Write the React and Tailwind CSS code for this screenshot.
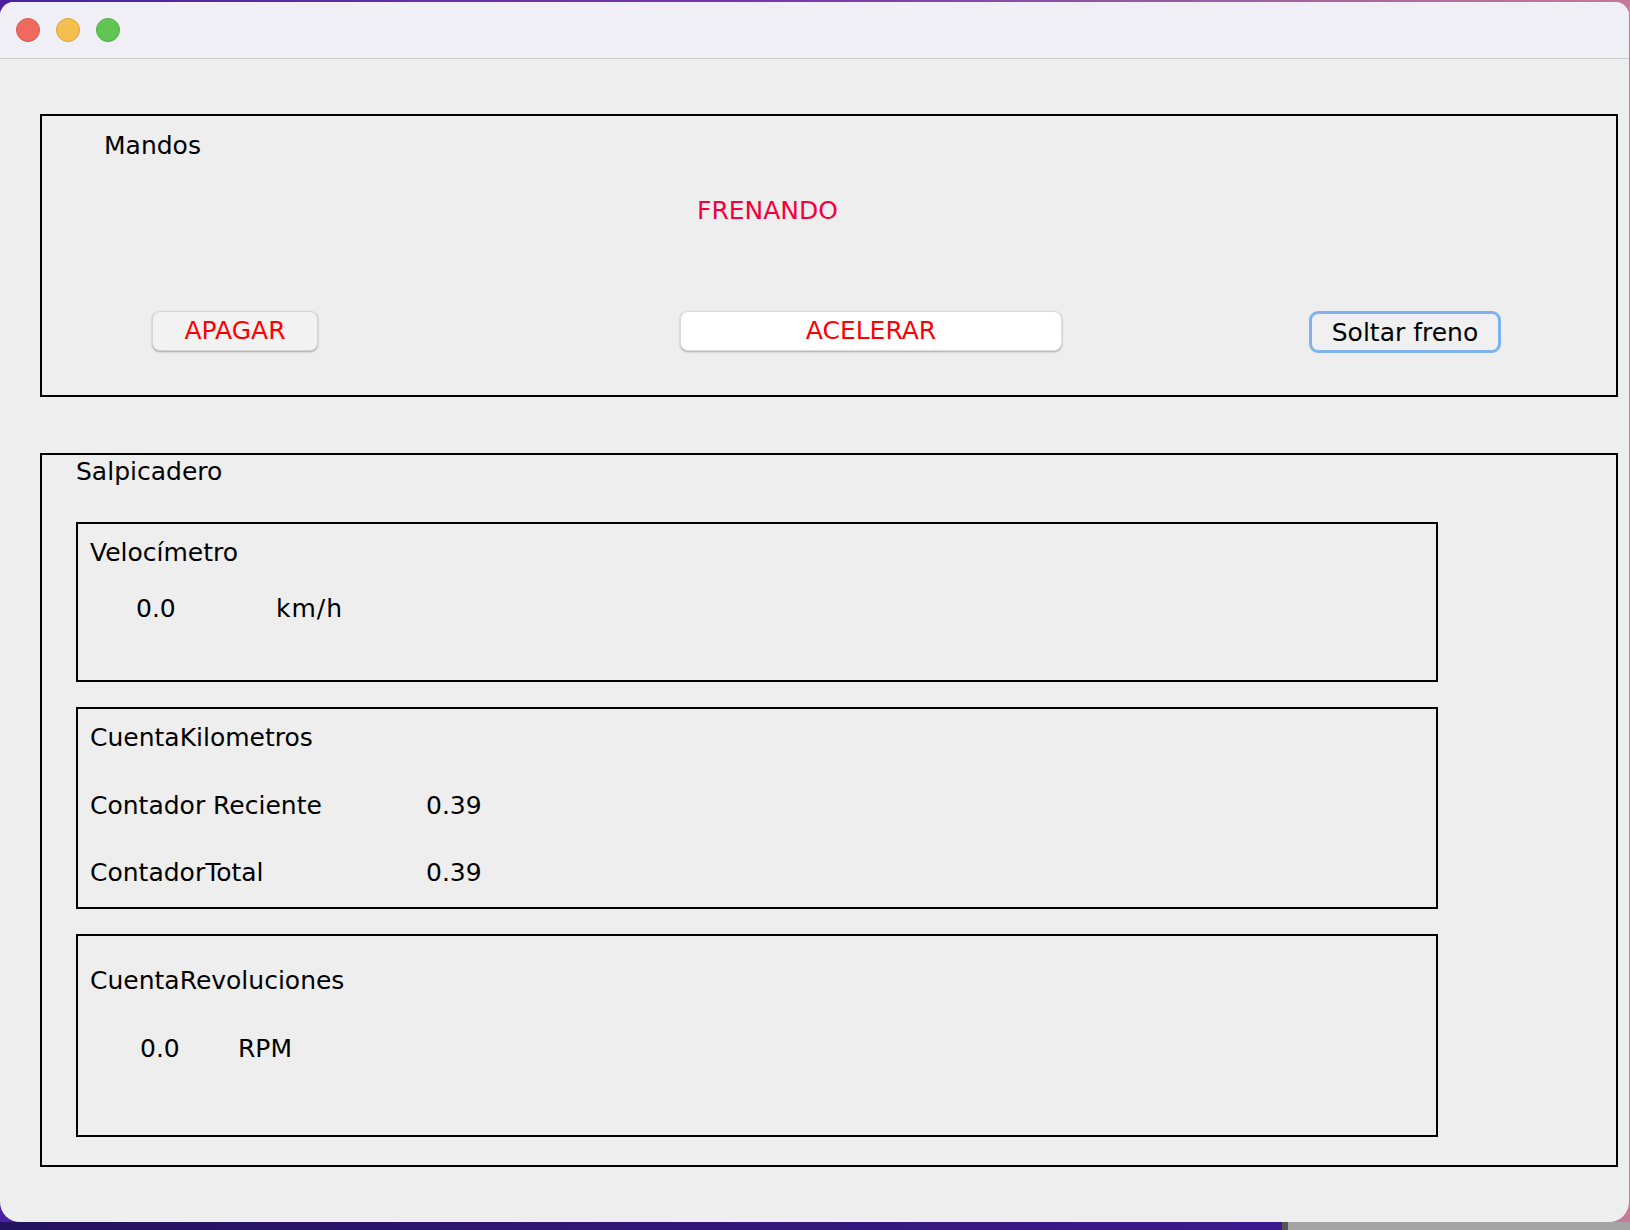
const font = { fontFamily: '"DejaVu Sans", "Liberation Sans", sans-serif' }

function TrafficLights() {
  return (
    <div className="flex items-center gap-[16px] pl-[16px]">
      <span className="h-[24px] w-[24px] rounded-full border border-[#d9574e] bg-[#ee6a5f]" />
      <span className="h-[24px] w-[24px] rounded-full border border-[#dba33c] bg-[#f5bf4f]" />
      <span className="h-[24px] w-[24px] rounded-full border border-[#4fae45] bg-[#61c554]" />
    </div>
  )
}

function Gauge({ title, className, children }) {
  return (
    <div className={`w-[1362px] border-2 border-black pl-[12px] ${className}`}>
      <p className="leading-[30px]">{title}</p>
      {children}
    </div>
  )
}

export default function App() {
  return (
    <div className="flex h-[1230px] w-[1630px] flex-col overflow-hidden bg-gradient-to-r from-[#4a1fa0] via-[#7a3aa8] to-[#c47a98] text-[25px] text-black" style={font}>
      <div className="mt-[2px] flex h-[1220px] w-[1629px] flex-col overflow-hidden rounded-t-[14px] rounded-b-[20px] bg-[#eeeeee]">
        {/* title bar */}
        <div className="flex h-[57px] items-center border-b border-[#cdcdcd] bg-[#f1eff6]">
          <TrafficLights />
        </div>

        {/* Mandos */}
        <section className="ml-[40px] mt-[55px] flex h-[283px] w-[1578px] flex-col border-2 border-black">
          <p className="ml-[62px] mt-[15px] leading-[30px]">Mandos</p>
          <p className="ml-[655px] mt-[35px] leading-[30px] text-[#f5003a]">FRENANDO</p>
          <div className="mt-[85px] flex items-start">
            <button className="ml-[110px] h-[40px] w-[166px] rounded-[8px] border border-[#d4d4d4] bg-[#f2f2f2] text-[#ff0000] shadow-[0_1px_2px_rgba(0,0,0,0.3)]">
              APAGAR
            </button>
            <button className="ml-[362px] h-[40px] w-[382px] rounded-[8px] border border-[#dddddd] bg-white text-[#ff0000] shadow-[0_1px_2px_rgba(0,0,0,0.3)]">
              ACELERAR
            </button>
            <button className="ml-[247px] h-[42px] w-[192px] rounded-[9px] border-[3px] border-[#80b3ee] bg-[#f0f0f0] text-black">
              Soltar freno
            </button>
          </div>
        </section>

        {/* Salpicadero */}
        <section className="ml-[40px] mt-[56px] flex h-[714px] w-[1578px] flex-col border-2 border-black">
          <p className="ml-[34px] mt-[2px] leading-[30px]">Salpicadero</p>
          <div className="ml-[34px] mt-[35px] flex flex-col gap-[25px]">
            <Gauge title="Velocímetro" className="h-[160px] pt-[14px]">
              <div className="mt-[26px] flex leading-[30px]">
                <span className="ml-[46px] w-[140px]">0.0</span>
                <span className="tracking-[1px]">km/h</span>
              </div>
            </Gauge>
            <Gauge title="CuentaKilometros" className="h-[202px] pt-[14px]">
              <div className="mt-[38px] flex leading-[30px]">
                <span className="w-[336px]">Contador Reciente</span>
                <span>0.39</span>
              </div>
              <div className="mt-[37px] flex leading-[30px]">
                <span className="w-[336px]">ContadorTotal</span>
                <span>0.39</span>
              </div>
            </Gauge>
            <Gauge title="CuentaRevoluciones" className="h-[203px] pt-[30px]">
              <div className="mt-[38px] flex leading-[30px]">
                <span className="ml-[50px] w-[98px]">0.0</span>
                <span>RPM</span>
              </div>
            </Gauge>
          </div>
        </section>
      </div>
      <div className="flex flex-1">
        <div className="w-[1282px] bg-gradient-to-r from-[#24135e] to-[#3d1a8c]" />
        <div className="w-[6px] bg-[#555555]" />
        <div className="flex-1 bg-[#a3a3a3]" />
      </div>
    </div>
  )
}
